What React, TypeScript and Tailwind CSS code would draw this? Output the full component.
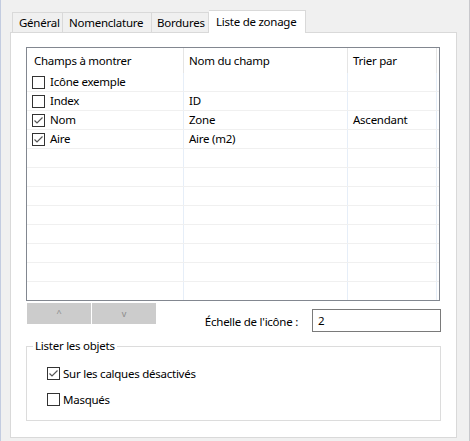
import React from 'react';

type Row = { label: string; checked: boolean; field: string; sort: string };

const rows: Row[] = [
  { label: 'Icône exemple', checked: false, field: '', sort: '' },
  { label: 'Index', checked: false, field: 'ID', sort: '' },
  { label: 'Nom', checked: true, field: 'Zone', sort: 'Ascendant' },
  { label: 'Aire', checked: true, field: 'Aire (m2)', sort: '' },
];

function CheckBox({ checked }: { checked: boolean }) {
  return (
    <div className="w-[13px] h-[13px] border border-[#333333] bg-white flex items-center justify-center shrink-0">
      {checked && (
        <svg width="11" height="11" viewBox="0 0 11 11">
          <polyline points="1.5,5.5 4,8 9.5,2.5" fill="none" stroke="#555555" strokeWidth="1.2" />
        </svg>
      )}
    </div>
  );
}

function Tab({ label, width }: { label: string; width: string }) {
  return (
    <div className={`${width} h-[20px] border-t border-l border-[#d9d9d9] bg-[#f0f0f0] flex items-center pl-[6px] whitespace-nowrap`}>
      {label}
    </div>
  );
}

export default function App() {
  const blank = Array.from({ length: 8 });

  return (
    <div
      className="w-[470px] h-[441px] bg-[#f0f0f0] border-l border-[#c3cce0] border-r border-r-[#c8c8cc] text-[11.5px] tracking-[-0.25px] text-black overflow-hidden"
      style={{ fontFamily: '"Noto Sans", "Open Sans", sans-serif' }}
    >
      {/* tabs */}
      <div className="flex items-end ml-[11px] pt-[10px]">
        <Tab label="Général" width="w-[50px]" />
        <Tab label="Nomenclature" width="w-[89px]" />
        <div className="w-[58px] h-[20px] border-t border-l border-r border-[#d9d9d9] bg-[#f0f0f0] flex items-center pl-[5px] whitespace-nowrap">
          Bordures
        </div>
        <div className="w-[97px] h-[23px] border-t border-r border-[#d9d9d9] bg-white flex items-center pl-[7px] -mb-px relative z-10 whitespace-nowrap">
          Liste de zonage
        </div>
      </div>

      {/* panel */}
      <div className="ml-[9px] w-[447px] h-[406px] bg-white border border-[#d9d9d9] pl-[15px] pt-[14px]">
        {/* list view */}
        <div className="w-[414px] h-[254px] border border-[#828790] overflow-hidden">
          <div className="flex h-[25px] items-center">
            <div className="w-[156px] pl-[7px] h-full flex items-center">Champs à montrer</div>
            <div className="w-px h-full bg-[#e5e5e5]" />
            <div className="w-[163px] pl-[5px] h-full flex items-center">Nom du champ</div>
            <div className="w-px h-full bg-[#e5e5e5]" />
            <div className="w-[88px] pl-[5px] h-full flex items-center">Trier par</div>
            <div className="w-px h-full bg-[#e5e5e5]" />
          </div>
          {rows.map((r) => (
            <div key={r.label} className="flex h-[19px] border-b border-[#f0f0f0]">
              <div className="w-[156px] pl-[5px] flex items-center gap-[5px]">
                <CheckBox checked={r.checked} />
                <span>{r.label}</span>
              </div>
              <div className="w-px bg-[#e6eef8]" />
              <div className="w-[163px] pl-[5px] flex items-center">{r.field}</div>
              <div className="w-px bg-[#e6eef8]" />
              <div className="w-[88px] pl-[5px] flex items-center">{r.sort}</div>
              <div className="w-px bg-[#e6eef8]" />
            </div>
          ))}
          {blank.map((_, i) => (
            <div key={i} className="flex h-[19px] border-b border-[#f0f0f0]">
              <div className="w-[156px]" />
              <div className="w-px bg-[#e6eef8]" />
              <div className="w-[163px]" />
              <div className="w-px bg-[#e6eef8]" />
              <div className="w-[88px]" />
              <div className="w-px bg-[#e6eef8]" />
            </div>
          ))}
        </div>

        {/* buttons + scale */}
        <div className="flex mt-[2px] w-[415px]">
          <div className="flex gap-[1px] pl-px">
            <button className="w-[64px] h-[21px] bg-[#cccccc] text-[#8a8a8a] text-[9px] flex items-start justify-center pt-[3px]">
              ^
            </button>
            <button className="w-[64px] h-[21px] bg-[#cccccc] text-[#8a8a8a] text-[9px] flex items-center justify-center">
              v
            </button>
          </div>
          <div className="flex items-center ml-auto mt-[6px]">
            <span className="mr-[14px] pt-[2px]">Échelle de l'icône :</span>
            <div className="w-[129px] h-[23px] border border-[#7a7a7a] pl-[5px] flex items-center">2</div>
          </div>
        </div>

        {/* group box */}
        <div className="relative mt-[14px] w-[415px] h-[75px] border border-[#dcdcdc] pt-[19px] pl-[20px]">
          <span className="absolute -top-[10px] left-[6px] bg-white px-[2px] leading-[18px]">Lister les objets</span>
          <div className="flex items-center gap-[3px] h-[15px]">
            <CheckBox checked />
            <span>Sur les calques désactivés</span>
          </div>
          <div className="flex items-center gap-[3px] h-[15px] mt-[11px]">
            <CheckBox checked={false} />
            <span>Masqués</span>
          </div>
        </div>
      </div>
    </div>
  );
}
